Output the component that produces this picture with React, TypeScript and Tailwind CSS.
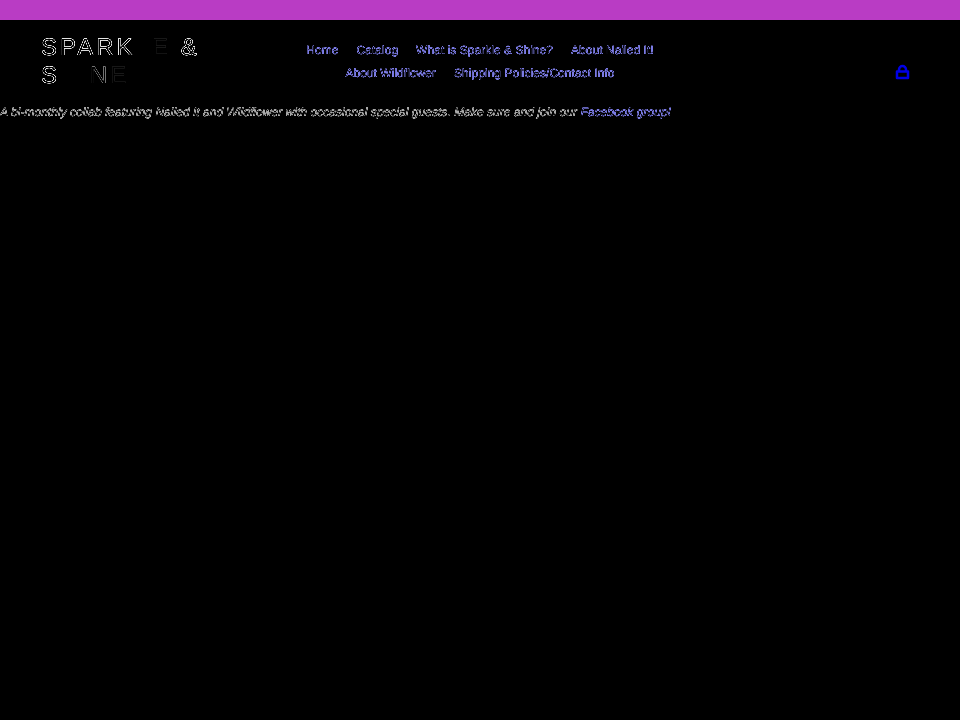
const links = [
  ["Home", "Catalog", "What is Sparkle & Shine?", "About Nailed It!"],
  ["About Wildflower", "Shipping Policies/Contact Info"],
];

export default function App() {
  return (
    <div className="min-h-[720px] bg-black font-['Liberation_Sans',Arial,sans-serif] [text-rendering:geometricPrecision] overflow-hidden">
      {/* thin out the glyphs so only the antialiased edge pixels stay */}
      <svg width="0" height="0" className="absolute">
        <filter id="edge" colorInterpolationFilters="sRGB" x="0" y="0" width="100%" height="100%">
          <feComponentTransfer>
            <feFuncA type="table" tableValues="0 0.9 0.9 0" />
          </feComponentTransfer>
        </filter>
      </svg>
      <div className="h-5 bg-[#b93cc4]" />
      <header className="flex items-start h-[80px] pl-[41px] pr-[50px]">
        <a className="block w-[219px] pt-[14px] text-[24px] leading-[28px] tracking-[3px] text-white [filter:url(#edge)]">
          SPARK<span className="text-black">L</span><span className="text-[#1c1c1c]">E</span> &amp;<br />
          S<span className="text-black">HI</span><span className="text-[#808080]">N</span><span className="text-[#1c1c1c]">E</span>
        </a>
        <nav className="w-[440px] pt-[19px] [filter:url(#edge)]">
          {links.map((row, i) => (
            <div key={i} className="flex justify-center gap-[18px] h-[23px] leading-[23px] text-[12px] tracking-[0.003em] text-[#8a8aff]">
              {row.map((l) => (
                <a key={l}>{l}</a>
              ))}
            </div>
          ))}
        </nav>
        <div className="ml-auto pt-[44px]">
          <svg width="15" height="16" viewBox="0 0 15 16" fill="none" stroke="#0000e6" strokeWidth="2.5">
            <path d="M2 7.5h11v6.5H2z" strokeLinejoin="round" />
            <path d="M4 7.5V5.5a3.5 3.5 0 0 1 7 0v2" />
          </svg>
        </div>
      </header>
      <p className="text-[12px] leading-[20px] italic tracking-[0.003em] text-[#bdbdbd] pt-[2px] [filter:url(#edge)]">
        A bi-monthly collab featuring Nailed It and Wildflower with occasional special guests. Make sure and join our{" "}
        <a className="text-[#8a8aff]">Facebook group!</a>
      </p>
    </div>
  );
}
